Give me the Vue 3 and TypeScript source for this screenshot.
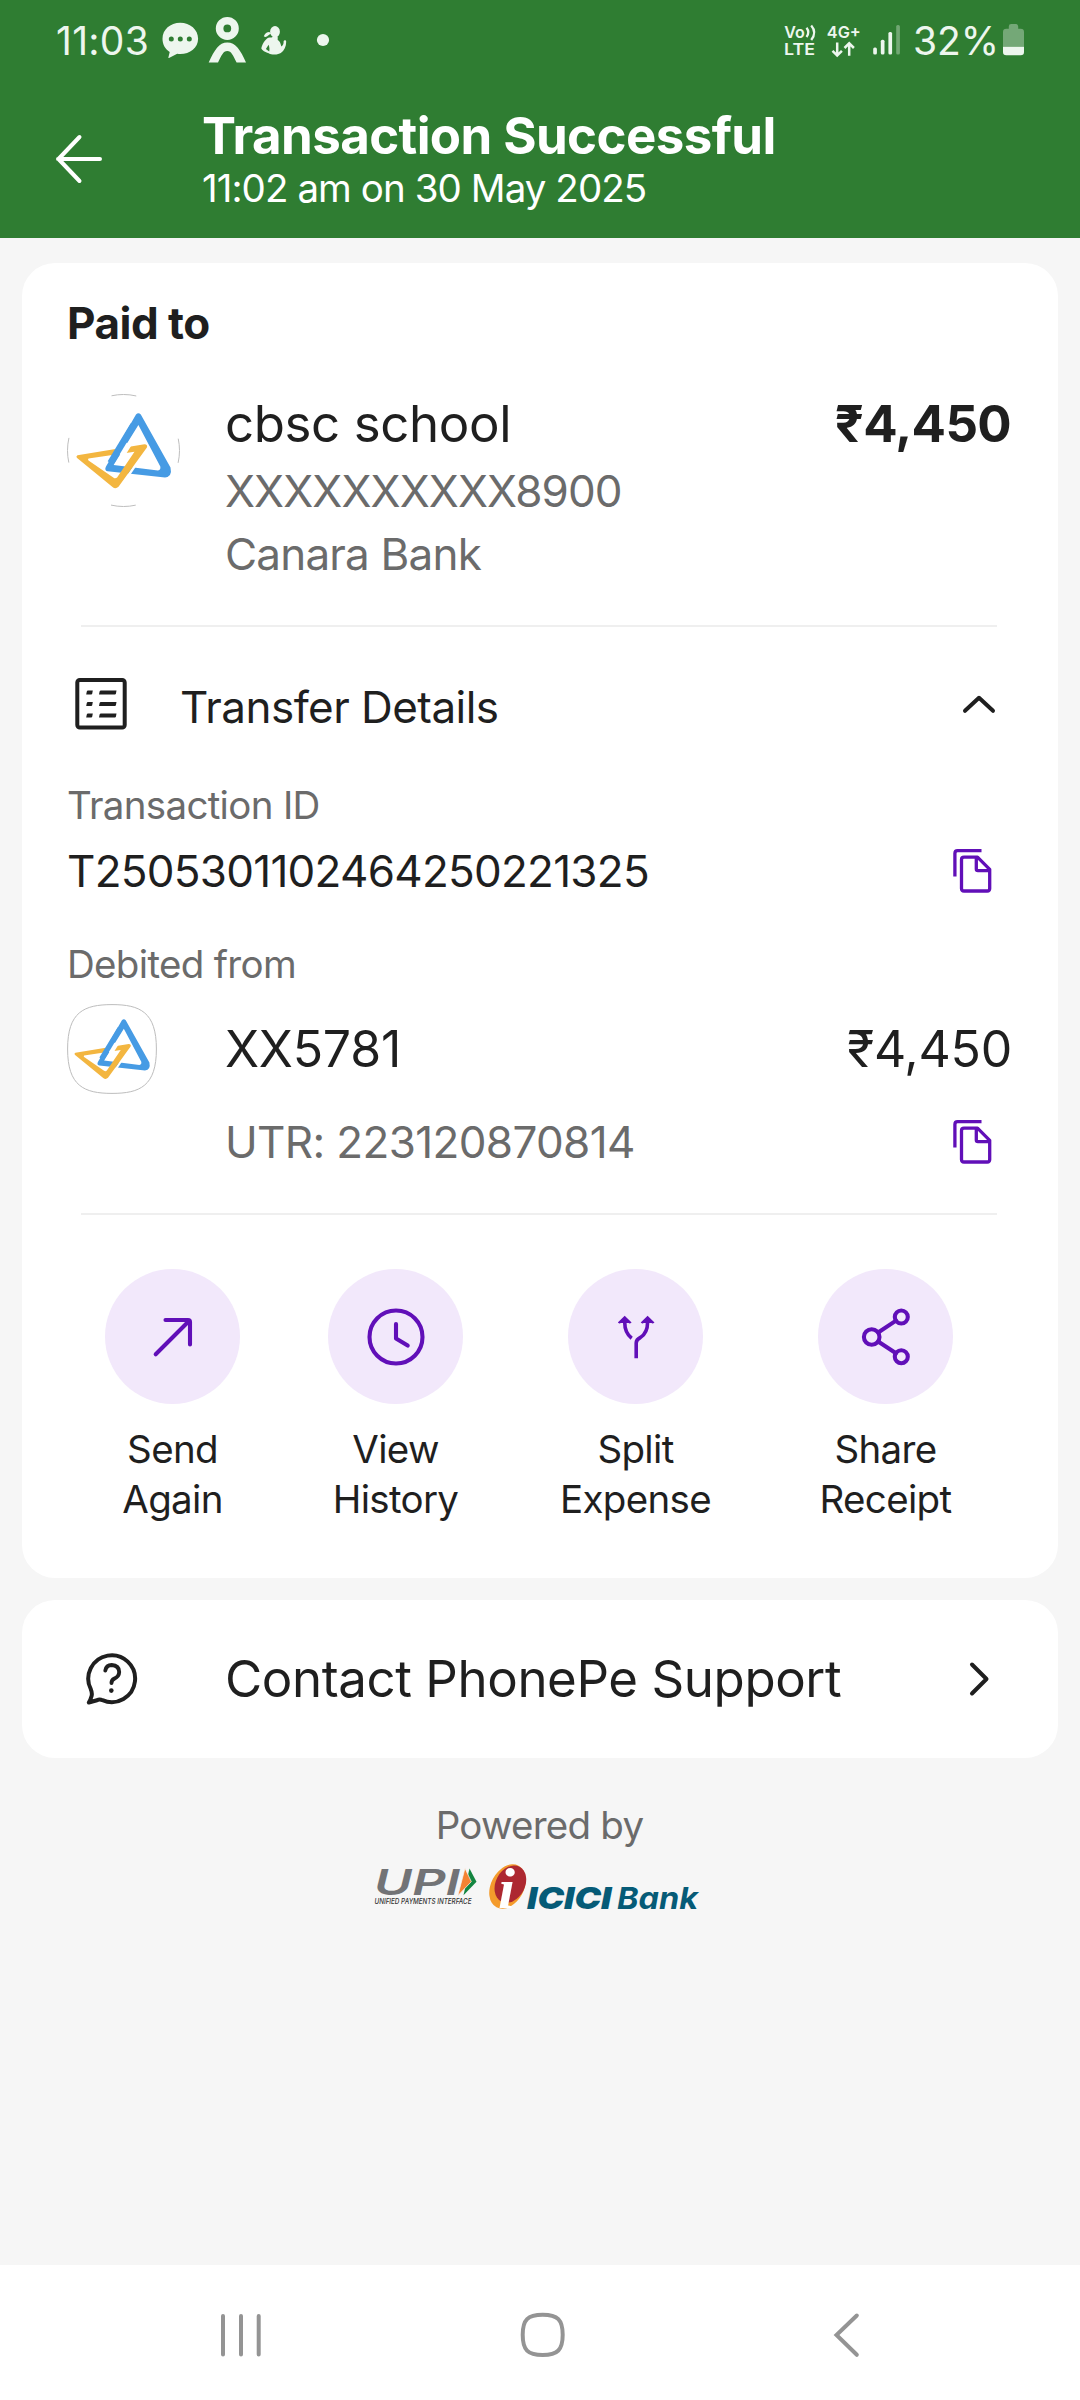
<script setup lang="ts">
interface Action {
  id: 'send' | 'history' | 'split' | 'share'
  lines: [string, string]
}

const amount = '₹4,450'
const actions: Action[] = [
  { id: 'send', lines: ['Send', 'Again'] },
  { id: 'history', lines: ['View', 'History'] },
  { id: 'split', lines: ['Split', 'Expense'] },
  { id: 'share', lines: ['Share', 'Receipt'] },
]
</script>

<template>
  <div class="screen">
    <header class="top">
      <div class="status">
        <div class="status-left">
          <span class="clock">11:03</span>
          <svg class="notif" width="180" height="60" viewBox="155 10 180 60" fill="#edf6ee">
            <path fill-rule="evenodd" d="M180.2 22.8c9.900 0 17.900 6.900 17.900 15.900s-8 15.300-17.900 15.300c-1 0-2-.1-3-.2l-8.200 4.100c-.4.200-.7 0-.6-.5l1.300-5.500c-4.500-2.800-7.200-7.600-7.200-13.200 0-9 7.800-15.900 17.700-15.900zM171.300 36.400a2.500 2.500 0 1 0 0 5 2.500 2.500 0 0 0 0-5zm9 0a2.500 2.500 0 1 0 0 5 2.500 2.500 0 0 0 0-5zm9 0a2.500 2.500 0 1 0 0 5 2.500 2.500 0 0 0 0-5z" />
            <circle cx="227.300" cy="28.400" r="7.700" fill="none" stroke="#edf6ee" stroke-width="7.600" />
            <path d="M208.700 62.500C214.500 50 219 42.500 227.300 42.500S240.500 50 246 62.500H236.600C233 55.500 231.500 51 227.300 51S221.500 55.500 218 62.500Z" />
            <ellipse cx="275" cy="31.700" rx="4.900" ry="5.700" />
            <path d="M263.800 36.200c1-2.600 3.200-4.200 5.400-4.200l2 1.200-3.400 2.600c-1 .9-2.500 1.900-4 .4z" />
            <path fill-rule="evenodd" d="M272.500 36.500h5.200v3.500c2 1.200 3.100 3.600 3.600 6.500 2-1.300 2.400-2.800 2.300-5.200.3-1.500 2.600-1.400 2.600.4 0 4.800-2 8.800-5.400 11.400-2.300 1.700-9.200 2.400-12.700-.2-2.300-.4-6.400-2.600-6.800-4.700 1.400-5.300 5-10.200 8.200-10.600 1.600 0 2.800 0 3-1.100zM268.600 44.800l-2.700 4.300 3.300 2.400c.5-2 .3-4.600-.6-6.700z" />
            <circle cx="323" cy="40" r="6.100" />
          </svg>
        </div>
        <div class="status-right">
          <svg width="130" height="44" viewBox="780 18 130 44" fill="#edf6ee" font-family="Inter, sans-serif" font-weight="600" font-size="16.500">
            <text x="784.300" y="37.700" textLength="20.500" lengthAdjust="spacingAndGlyphs">Vo</text>
            <path d="M806.500 27.800q3.600 4.500 0 9.200M811.200 25.500q6 6.800 0 14.500" fill="none" stroke="#edf6ee" stroke-width="2.300" />
            <text x="784" y="55" textLength="31" lengthAdjust="spacingAndGlyphs">LTE</text>
            <text x="826.800" y="37.700" textLength="34" lengthAdjust="spacingAndGlyphs">4G+</text>
            <path d="M837.200 42.500V55M832.500 50.800l4.700 4.700 4.700-4.700M849.200 55.800V43.500M844.500 48l4.700-4.700L853.900 48" fill="none" stroke="#edf6ee" stroke-width="2.500" />
            <rect x="873.200" y="47.500" width="3.700" height="7" rx="1.500" />
            <rect x="880.800" y="39.800" width="3.700" height="14.700" rx="1.500" />
            <rect x="888.400" y="32" width="3.700" height="22.500" rx="1.500" />
            <rect x="896.200" y="25" width="3.700" height="29.500" rx="1.500" opacity=".35" />
          </svg>
          <span class="percent">32%</span>
          <svg width="21" height="32" viewBox="0 0 21 32">
            <path fill="#74a877" d="M8.200 0h4.600q2.400 0 2.400 2.400V4.700h2.500Q21 4.700 21 8V22.700H0V8Q0 4.700 3.300 4.700H5.800V2.400Q5.800 0 8.200 0z" />
            <path fill="#edf6ee" d="M0 22.700h21V28q0 3.300-3.300 3.300H3.300Q0 31.300 0 28z" />
          </svg>
        </div>
      </div>
      <div class="heading">
        <svg class="back" width="50" height="52" viewBox="0 0 50 52" fill="none" stroke="#fff" stroke-width="4" stroke-linecap="round" stroke-linejoin="round">
          <path d="M45 26H3M24.500 4 3.500 26l21 22" />
        </svg>
        <div>
          <h1>Transaction Successful</h1>
          <p>11:02 am on 30 May 2025</p>
        </div>
      </div>
    </header>

    <main>
      <section class="card payment">
        <h2>Paid to</h2>
        <div class="payee">
          <svg class="payee-logo" width="113" height="113" viewBox="0 0 113 113">
            <circle cx="56.500" cy="56.500" r="56" fill="none" stroke="#bebebe" stroke-dasharray="25 62.960" stroke-dashoffset="12.500" />
            <g id="bank-mark">
              <path fill="#469be4" fill-rule="evenodd" d="M69 20.500q2.400-2.600 4.800 0L103.500 73.500q2 9-5.500 10L40.500 77.200q-3.500-1-1.500-4.800zM71.400 31 46.600 71 91 76.500q3-.5 2.300-4z" />
              <path d="M81.500 52 62 80.500" stroke="#fff" stroke-width="2.500" />
              <path fill="#f3b640" fill-rule="evenodd" d="M10.500 61.200 77.500 50.300q3.500.2 2.400 3.200L51.500 92.800q-3 2.800-6 .1L9.800 63.800q-1-1.800.7-2.600zM21.500 64.600q-1 .9 0 2L46.600 83.800q1.800 1.200 3.500-.3L67.500 57.700z" />
              <path d="M61 49.500 53.800 61" stroke="#fff" stroke-width="8" />
              <path d="M66.500 31 43.500 69" stroke="#469be4" stroke-width="6.600" />
            </g>
          </svg>
          <div class="payee-text">
            <div class="name">cbsc school</div>
            <div class="account">XXXXXXXXXX8900</div>
            <div class="bank">Canara Bank</div>
          </div>
          <div class="total">{{ amount }}</div>
        </div>
        <hr />
        <div class="details-head">
          <svg class="list" width="52" height="52" viewBox="0 0 52 52">
            <rect x="2.300" y="2" width="47.400" height="47.600" rx="2.500" fill="none" stroke="#1f1f1f" stroke-width="4" />
            <path fill="#1f1f1f" d="M13 12.600h4.800l-.6 3.200q-.2.800-1 .8H11.200l.6-3.200q.2-.8 1.200-.8zM13 24.100h4.800l-.6 3.200q-.2.800-1 .8H11.200l.6-3.200q.2-.8 1.200-.8zM13 35.600h4.800l-.6 3.200q-.2.800-1 .8H11.200l.6-3.200q.2-.8 1.200-.8zM26 12.600h15.500l-.6 3.200q-.2.800-1 .8H24l.6-3.200q.2-.8 1.400-.8zM26 24.100h15.500l-.6 3.200q-.2.800-1 .8H24l.6-3.200q.2-.8 1.400-.8zM26 35.600h15.500l-.6 3.200q-.2.800-1 .8H24l.6-3.200q.2-.8 1.400-.8z" />
          </svg>
          <span class="details-title">Transfer Details</span>
          <svg class="chevron-up" width="34" height="22" viewBox="0 0 34 22" fill="none" stroke="#1f1f1f" stroke-width="4" stroke-linecap="round" stroke-linejoin="round">
            <path d="M3 17.800 17 4.800l14 13" />
          </svg>
        </div>
        <div class="label txn-label">Transaction ID</div>
        <div class="value-row">
          <span class="txn">T2505301102464250221325</span>
          <svg class="copy" width="40" height="46" viewBox="0 0 40 46" fill="none" stroke="#610fb8" stroke-width="3.300" stroke-linejoin="round">
            <path d="M2.900 28.500V5.400q0-2.700 2.700-2.700H29.500" />
            <path d="M12 9.200H25.500L37.700 21.300V40.500q0 2.500-2.500 2.500H12q-2.500 0-2.500-2.500V11.700q0-2.500 2.500-2.500zM24.300 9.500V21q0 1.600 1.600 1.600H37.700" />
          </svg>
        </div>
        <div class="label debit-label">Debited from</div>
        <div class="debit">
          <svg class="debit-logo" width="90" height="90" viewBox="0 0 90 90">
            <path d="M45 .6C73 .6 89.400 8 89.400 45S73 89.400 45 89.400 .6 82 .6 45 17 .6 45 .6z" fill="#fff" stroke="#bdbdbd" />
            <use href="#bank-mark" transform="scale(.796)" />
          </svg>
          <span class="debit-name">XX5781</span>
          <span class="debit-amount">{{ amount }}</span>
        </div>
        <div class="value-row utr-row">
          <span class="utr">UTR: 223120870814</span>
          <svg class="copy" width="40" height="46" viewBox="0 0 40 46" fill="none" stroke="#610fb8" stroke-width="3.300" stroke-linejoin="round">
            <path d="M2.900 28.500V5.400q0-2.700 2.700-2.700H29.500" />
            <path d="M12 9.200H25.500L37.700 21.300V40.500q0 2.500-2.500 2.500H12q-2.500 0-2.500-2.500V11.700q0-2.500 2.500-2.500zM24.300 9.500V21q0 1.600 1.600 1.600H37.700" />
          </svg>
        </div>
        <hr class="second" />
        <div class="actions">
          <div v-for="a in actions" :key="a.id" class="action">
            <div class="disc">
              <svg width="135" height="135" viewBox="0 0 135 135" fill="none" stroke="#610fb8" stroke-width="4.100" stroke-linecap="round" stroke-linejoin="round">
                <path v-if="a.id === 'send'" d="M50.700 85.300 84 52M60.500 51H83q2 0 2 2V75.500" />
                <g v-else-if="a.id === 'history'">
                  <circle cx="68" cy="68" r="26.500" />
                  <path d="M68 55v14.500l11.700 7.100" />
                </g>
                <g v-else-if="a.id === 'split'" stroke-width="3.600" stroke-linecap="butt">
                  <path d="M68.200 89.300V74q0-3.500 4.200-5.500Q79.600 64 79.600 53M56.700 53q0 11 7 16.200" />
                  <path d="M56.700 46.700 63.600 53.600q-.8 1-2 .8l-1-.5h-7.800l-1 .5q-1.200.2-2-.8zM79.600 46.700 86.500 53.600q-.8 1-2 .8l-1-.5h-7.800l-1 .5q-1.200.2-2-.8z" fill="#610fb8" stroke="none" />
                </g>
                <g v-else>
                  <circle cx="53.700" cy="68" r="7.800" />
                  <circle cx="83.300" cy="48" r="6.500" />
                  <circle cx="83.300" cy="87.700" r="6.500" />
                  <path d="M60.500 63.300 78 51.600M60.500 72.700 78 84.200" />
                </g>
              </svg>
            </div>
            <span v-for="line in a.lines" :key="line" class="action-line">{{ line }}</span>
          </div>
        </div>
      </section>

      <section class="card support">
        <svg class="help" width="54" height="54" viewBox="0 0 54 54" fill="none" stroke="#1f1f1f" stroke-width="4" stroke-linecap="round" stroke-linejoin="round">
          <path d="M5.800 37.200A23.400 23.400 0 1 1 17.500 48.200Q14.500 46.800 12 48.200L3.800 50.500q1.800-2.800 2.800-6.500.8-3-.8-6.800z" />
          <path d="M20.300 18.500q1-5.500 6.400-5.500 7.300.3 7.500 7-.2 4.600-4.800 6.600-2.900 1.300-2.900 4.400" stroke-width="3.900" />
          <circle cx="26.300" cy="38.600" r="2.300" fill="#1f1f1f" stroke="none" />
        </svg>
        <span class="support-text">Contact PhonePe Support</span>
        <svg class="chevron-right" width="24" height="36" viewBox="0 0 24 36" fill="none" stroke="#1f1f1f" stroke-width="4" stroke-linecap="round" stroke-linejoin="round">
          <path d="M4 3.500 18.500 18 4 32.500" />
        </svg>
      </section>

      <div class="powered">
        <span class="powered-text">Powered by</span>
        <svg width="330" height="70" viewBox="372 1854 330 70" font-family="Inter, sans-serif" font-style="italic">
          <text x="374" y="1894.800" font-size="35.500" font-weight="600" fill="#727376" textLength="86" lengthAdjust="spacingAndGlyphs">UPI</text>
          <path fill="#138540" d="M469.500 1868.500l7 13.200-13 13.500z" />
          <path fill="#f58232" stroke="#f6f6f6" stroke-width=".7" d="M465 1868.300l6.300 13.400-13.500 14z" />
          <text x="374.500" y="1904.300" font-size="7" font-weight="500" fill="#333" textLength="97" lengthAdjust="spacingAndGlyphs">UNIFIED PAYMENTS INTERFACE</text>
          <g transform="rotate(28 507.500 1886.500)">
            <ellipse cx="507.500" cy="1886.500" rx="16.500" ry="23.500" fill="#f49b2c" />
            <ellipse cx="508.900" cy="1883" rx="14.600" ry="19.600" fill="#ad2831" />
          </g>
          <text x="498" y="1908" font-family="'Liberation Serif', serif" font-size="57" font-weight="700" fill="#fff" textLength="17" lengthAdjust="spacingAndGlyphs">i</text>
          <text x="527" y="1908.800" font-size="30.500" font-weight="900" fill="#065b77" textLength="84.500" lengthAdjust="spacingAndGlyphs">ICICI</text>
          <text x="617" y="1908.800" font-size="30" font-weight="700" fill="#065b77" textLength="81" lengthAdjust="spacingAndGlyphs">Bank</text>
        </svg>
      </div>
    </main>

    <nav>
      <svg width="1080" height="135" viewBox="0 0 1080 135" fill="none" stroke="#949494" stroke-width="4" stroke-linecap="round">
        <path d="M223 51V89.500M241 51V89.500M258.700 51V89.500" />
        <path d="M542.700 49.800c15 0 20 5 20 20s-5 20.200-20 20.200-20-5-20-20.200 5-20 20-20z" />
        <path d="M856.800 50.500 836.500 70l20.300 19.800" />
      </svg>
    </nav>
  </div>
</template>

<style>
body {
  margin: 0;
  background: #f6f6f6;
}
</style>

<style scoped>
.screen {
  width: 1080px;
  height: 2400px;
  display: flex;
  flex-direction: column;
  overflow: hidden;
  background: #f6f6f6;
  color: #1f1f1f;
  font-family: Inter, 'Noto Sans', sans-serif;
  white-space: nowrap;
}
svg {
  display: block;
  flex: none;
}
h1, h2, p {
  margin: 0;
}
.top {
  height: 238px;
  background: #2f7d32;
  color: #fff;
}
.status {
  height: 80px;
  display: flex;
  justify-content: space-between;
  padding: 0 56px;
  color: #edf6ee;
  font-size: 39px;
}
.status-left, .status-right {
  display: flex;
  align-items: center;
}
.clock {
  width: 99px;
  letter-spacing: 0.3px;
}
.percent {
  width: 90px;
  margin-left: 3px;
}
.heading {
  display: flex;
  align-items: center;
  height: 158px;
}
.heading > div {
  margin-top: -2px;
}
.back {
  margin: 0 97px 0 55px;
}
h1 {
  line-height: 60px;
  font-size: 51px;
  font-weight: 700;
  letter-spacing: -0.6px;
}
.heading p {
  line-height: 45px;
  font-size: 38.5px;
  letter-spacing: -0.93px;
}
main {
  flex: 1;
  padding: 25px 22px 0;
}
.card {
  background: #fff;
  border-radius: 33px;
}
.payment {
  padding: 30px 45px 54px;
}
h2 {
  line-height: 60px;
  font-size: 44px;
  font-weight: 700;
  letter-spacing: -0.5px;
}
.payee {
  display: flex;
  margin-top: 41px;
}
.payee-text {
  flex: 1;
  margin-left: 45px;
}
.name {
  line-height: 60px;
  font-size: 51px;
  letter-spacing: -0.4px;
}
.account {
  line-height: 74px;
  font-size: 44px;
  letter-spacing: -0.9px;
  color: #6b6b6b;
}
.bank {
  line-height: 52px;
  font-size: 44px;
  letter-spacing: -0.8px;
  color: #6b6b6b;
}
.total {
  margin-right: 2px;
  line-height: 60px;
  font-size: 51px;
  font-weight: 700;
  letter-spacing: -0.7px;
}
hr {
  height: 2px;
  margin: 45px 16px 0 14px;
  border: 0;
  background: #efefef;
}
hr.second {
  margin-top: 23px;
}
.details-head {
  display: flex;
  align-items: center;
  height: 160px;
  font-size: 44px;
}
.list {
  margin: 0 53px 6px 8px;
}
.details-title {
  flex: 1;
  letter-spacing: -0.55px;
}
.chevron-up {
  margin: 0 17px 6px 0;
}
.label {
  font-size: 38.5px;
  letter-spacing: -0.68px;
  color: #6b6b6b;
}
.txn-label {
  line-height: 36px;
}
.value-row {
  display: flex;
  align-items: center;
  justify-content: space-between;
  height: 96px;
  font-size: 44px;
  letter-spacing: -0.74px;
}
.copy {
  margin-right: 21px;
}
.debit-label {
  margin-top: 6px;
  line-height: 79px;
}
.debit {
  display: flex;
  align-items: center;
  height: 90px;
  font-size: 50px;
  letter-spacing: -0.25px;
}
.debit-name {
  flex: 1;
  margin-left: 68px;
}
.debit-amount {
  margin-right: 1px;
}
.utr-row {
  padding-left: 158px;
  letter-spacing: -0.64px;
  color: #6b6b6b;
}
.actions {
  display: grid;
  grid-template-columns: 211px 235px 245px 255px;
  margin-top: 54px;
}
.action {
  display: flex;
  flex-direction: column;
  align-items: center;
}
.disc {
  width: 135px;
  height: 135px;
  margin-bottom: 20px;
  border-radius: 50%;
  background: #f2e8fb;
}
.action-line {
  line-height: 50px;
  font-size: 38.5px;
  letter-spacing: -0.67px;
}
.support {
  display: flex;
  align-items: center;
  height: 158px;
  margin-top: 22px;
  font-size: 51px;
}
.help {
  margin-left: 63px;
}
.support-text {
  flex: 1;
  margin: 0 0 2px 86px;
  letter-spacing: -0.42px;
}
.chevron-right {
  margin-right: 66px;
}
.powered {
  display: flex;
  flex-direction: column;
  align-items: center;
  padding-top: 42px;
  font-size: 38.5px;
  line-height: 50px;
  letter-spacing: -0.75px;
  color: #6b6b6b;
}
.powered-text {
  margin-right: 1px;
}
.powered svg {
  margin-top: 4px;
  margin-right: 6px;
  letter-spacing: 0;
}
nav {
  height: 135px;
  background: #fff;
}
</style>
